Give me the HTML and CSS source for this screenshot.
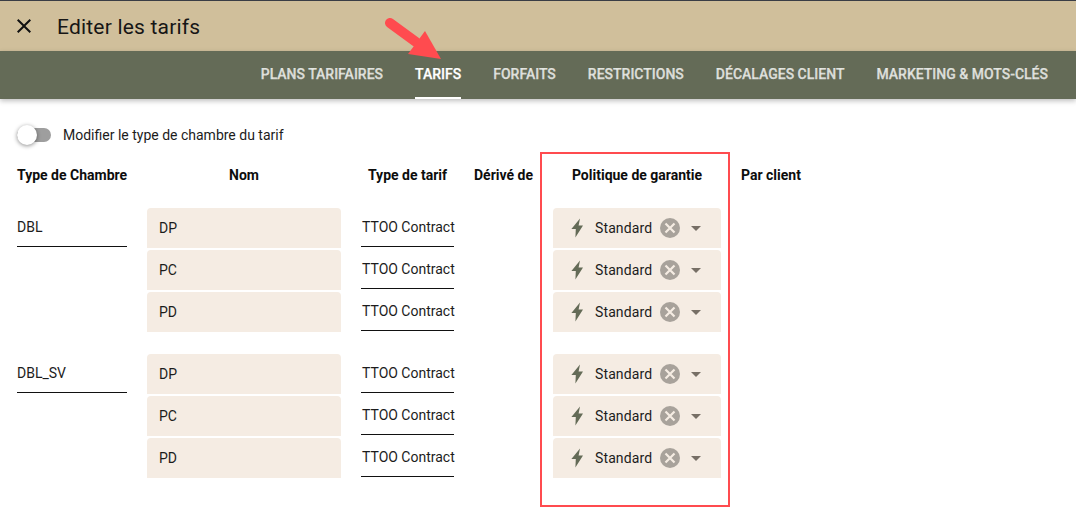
FILE: index.html
```html
<!DOCTYPE html>
<html lang="fr">
<head>
<meta charset="utf-8">
<title>Editer les tarifs</title>
<link rel="stylesheet" href="styles.css">
</head>
<body>
<header class="topbar">
  <svg class="close" width="24" height="24" viewBox="0 0 24 24"><path d="M19 6.41 17.59 5 12 10.59 6.41 5 5 6.41 10.59 12 5 17.59 6.41 19 12 13.41 17.59 19 19 17.59 13.41 12z"/></svg>
  <h1 class="title">Editer les tarifs</h1>
</header>
<nav class="tabs">
  <a class="tab">PLANS TARIFAIRES</a>
  <a class="tab active">TARIFS</a>
  <a class="tab">FORFAITS</a>
  <a class="tab">RESTRICTIONS</a>
  <a class="tab">DÉCALAGES CLIENT</a>
  <a class="tab">MARKETING &amp; MOTS-CLÉS</a>
</nav>
<main class="content">
  <div class="toggle-row">
    <span class="switch"><span class="knob"></span></span>
    <span>Modifier le type de chambre du tarif</span>
  </div>
  <div class="grid head">
    <div class="nowrap">Type de Chambre</div>
    <div class="center">Nom</div>
    <div class="center">Type de tarif</div>
    <div class="nowrap">Dérivé de</div>
    <div class="center">Politique de garantie</div>
    <div>Par client</div>
  </div>

  <div class="grid group">
    <div class="line room">DBL</div>
    <div class="stack">
      <div class="name">DP</div>
      <div class="name">PC</div>
      <div class="name">PD</div>
    </div>
    <div class="stack">
      <div class="line">TTOO Contract</div>
      <div class="line">TTOO Contract</div>
      <div class="line">TTOO Contract</div>
    </div>
    <div></div>
    <div class="stack">
      <div class="policy"><svg class="bolt" width="14" height="20" viewBox="0 0 14 20"><path d="M10 .6 1.400 11H5.800L5.400 19.400 13 7.600H8.600z"/></svg><span class="policy-text">Standard</span><svg class="clear" width="20" height="20" viewBox="0 0 20 20"><circle cx="10" cy="10" r="10"/><path d="m5.500 5.500 9 9m0-9-9 9"/></svg><span class="caret"></span></div>
      <div class="policy"><svg class="bolt" width="14" height="20" viewBox="0 0 14 20"><path d="M10 .6 1.400 11H5.800L5.400 19.400 13 7.600H8.600z"/></svg><span class="policy-text">Standard</span><svg class="clear" width="20" height="20" viewBox="0 0 20 20"><circle cx="10" cy="10" r="10"/><path d="m5.500 5.500 9 9m0-9-9 9"/></svg><span class="caret"></span></div>
      <div class="policy"><svg class="bolt" width="14" height="20" viewBox="0 0 14 20"><path d="M10 .6 1.400 11H5.800L5.400 19.400 13 7.600H8.600z"/></svg><span class="policy-text">Standard</span><svg class="clear" width="20" height="20" viewBox="0 0 20 20"><circle cx="10" cy="10" r="10"/><path d="m5.500 5.500 9 9m0-9-9 9"/></svg><span class="caret"></span></div>
    </div>
    <div></div>
  </div>

  <div class="grid group">
    <div class="line room">DBL_SV</div>
    <div class="stack">
      <div class="name">DP</div>
      <div class="name">PC</div>
      <div class="name">PD</div>
    </div>
    <div class="stack">
      <div class="line">TTOO Contract</div>
      <div class="line">TTOO Contract</div>
      <div class="line">TTOO Contract</div>
    </div>
    <div></div>
    <div class="stack">
      <div class="policy"><svg class="bolt" width="14" height="20" viewBox="0 0 14 20"><path d="M10 .6 1.400 11H5.800L5.400 19.400 13 7.600H8.600z"/></svg><span class="policy-text">Standard</span><svg class="clear" width="20" height="20" viewBox="0 0 20 20"><circle cx="10" cy="10" r="10"/><path d="m5.500 5.500 9 9m0-9-9 9"/></svg><span class="caret"></span></div>
      <div class="policy"><svg class="bolt" width="14" height="20" viewBox="0 0 14 20"><path d="M10 .6 1.400 11H5.800L5.400 19.400 13 7.600H8.600z"/></svg><span class="policy-text">Standard</span><svg class="clear" width="20" height="20" viewBox="0 0 20 20"><circle cx="10" cy="10" r="10"/><path d="m5.500 5.500 9 9m0-9-9 9"/></svg><span class="caret"></span></div>
      <div class="policy"><svg class="bolt" width="14" height="20" viewBox="0 0 14 20"><path d="M10 .6 1.400 11H5.800L5.400 19.400 13 7.600H8.600z"/></svg><span class="policy-text">Standard</span><svg class="clear" width="20" height="20" viewBox="0 0 20 20"><circle cx="10" cy="10" r="10"/><path d="m5.500 5.500 9 9m0-9-9 9"/></svg><span class="caret"></span></div>
    </div>
    <div></div>
  </div>
</main>
<div class="highlight"></div>
<svg class="arrow" width="62" height="48" viewBox="0 0 62 48"><path d="M7 6 33 25" stroke="#ff4b4f" stroke-width="10" stroke-linecap="round"/><path d="M42 14 58 42 25 37z" fill="#ff4b4f"/></svg>
</body>
</html>
```
FILE: styles.css
```css
* { box-sizing: border-box; }
html, body { margin: 0; padding: 0; }
body {
  position: relative;
  width: 1076px;
  height: 526px;
  overflow: hidden;
  background: #fff;
  font-family: Roboto, "Liberation Sans", sans-serif;
  font-size: 14px;
  color: #1c1c1c;
}
.topbar {
  height: 51px;
  display: flex;
  align-items: center;
  gap: 21px;
  padding: 0 12px;
  background: #d0bf9b;
  border-top: 1px solid #3a3d45;
}
.close { fill: #111; flex: none; }
.title {
  margin: 0;
  font-size: 21px;
  font-weight: 400;
  color: #161616;
  letter-spacing: .2px;
  position: relative;
  top: 1px;
}
.tabs {
  height: 48px;
  display: flex;
  justify-content: flex-end;
  gap: 32px;
  padding-right: 28px;
  background: #646b57;
  box-shadow: 0 2px 5px rgba(0,0,0,.25);
}
.tab {
  display: flex;
  align-items: center;
  height: 48px;
  font-size: 14px;
  font-weight: 500;
  -webkit-text-stroke: .25px currentColor;
  color: rgba(255,255,255,.76);
  border-bottom: 2px solid transparent;
}
.tab.active {
  color: #fff;
  border-bottom-color: #fff;
}
.content { padding: 0 0 0 17px; }
.toggle-row {
  display: flex;
  align-items: center;
  gap: 12px;
  height: 24px;
  margin-top: 24px;
}
.switch {
  position: relative;
  display: block;
  width: 34px;
  height: 14px;
  border-radius: 7px;
  background: #9e9e9e;
}
.knob {
  position: absolute;
  left: 0;
  top: -3px;
  width: 20px;
  height: 20px;
  border-radius: 50%;
  background: #fff;
  box-shadow: 0 1px 4px rgba(0,0,0,.45);
}
.grid {
  display: grid;
  grid-template-columns: 110px 194px 93px 59px 168px 80px;
  column-gap: 20px;
}
.head {
  margin-top: 16px;
  height: 24px;
  line-height: 24px;
  font-weight: 700;
  color: #0d0d0d;
}
.nowrap { white-space: nowrap; }
.center { text-align: center; }
.group { margin-top: 22px; align-items: start; }
.head + .group { margin-top: 21px; }
.stack { display: flex; flex-direction: column; gap: 2px; }
.line {
  height: 39px;
  padding: 9px 0 0 1px;
  line-height: 20px;
  border-bottom: 1px solid #111;
  white-space: nowrap;
  margin-bottom: 1px;
}
.room { padding-left: 0; }
.name {
  height: 40px;
  padding-left: 12px;
  line-height: 40px;
  background: #f5ece3;
  border-radius: 4px 4px 0 0;
}
.policy {
  height: 40px;
  display: flex;
  align-items: center;
  padding-left: 17px;
  background: #f5ece3;
  border-radius: 4px 4px 0 0;
}
.bolt { fill: #646b57; flex: none; }
.policy-text { margin-left: 11px; width: 65px; flex: none; letter-spacing: .12px; }
.clear { flex: none; }
.clear circle { fill: #a8a29b; }
.clear path { stroke: #f5ece3; stroke-width: 2.2; fill: none; }
.caret {
  margin-left: 11px;
  width: 0;
  height: 0;
  border-left: 5px solid transparent;
  border-right: 5px solid transparent;
  border-top: 5px solid #776f66;
}
.highlight {
  position: absolute;
  left: 540px;
  top: 152px;
  width: 190px;
  height: 355px;
  border: 2px solid #ff4b4f;
  pointer-events: none;
}
.arrow {
  position: absolute;
  left: 383px;
  top: 17px;
}
```
